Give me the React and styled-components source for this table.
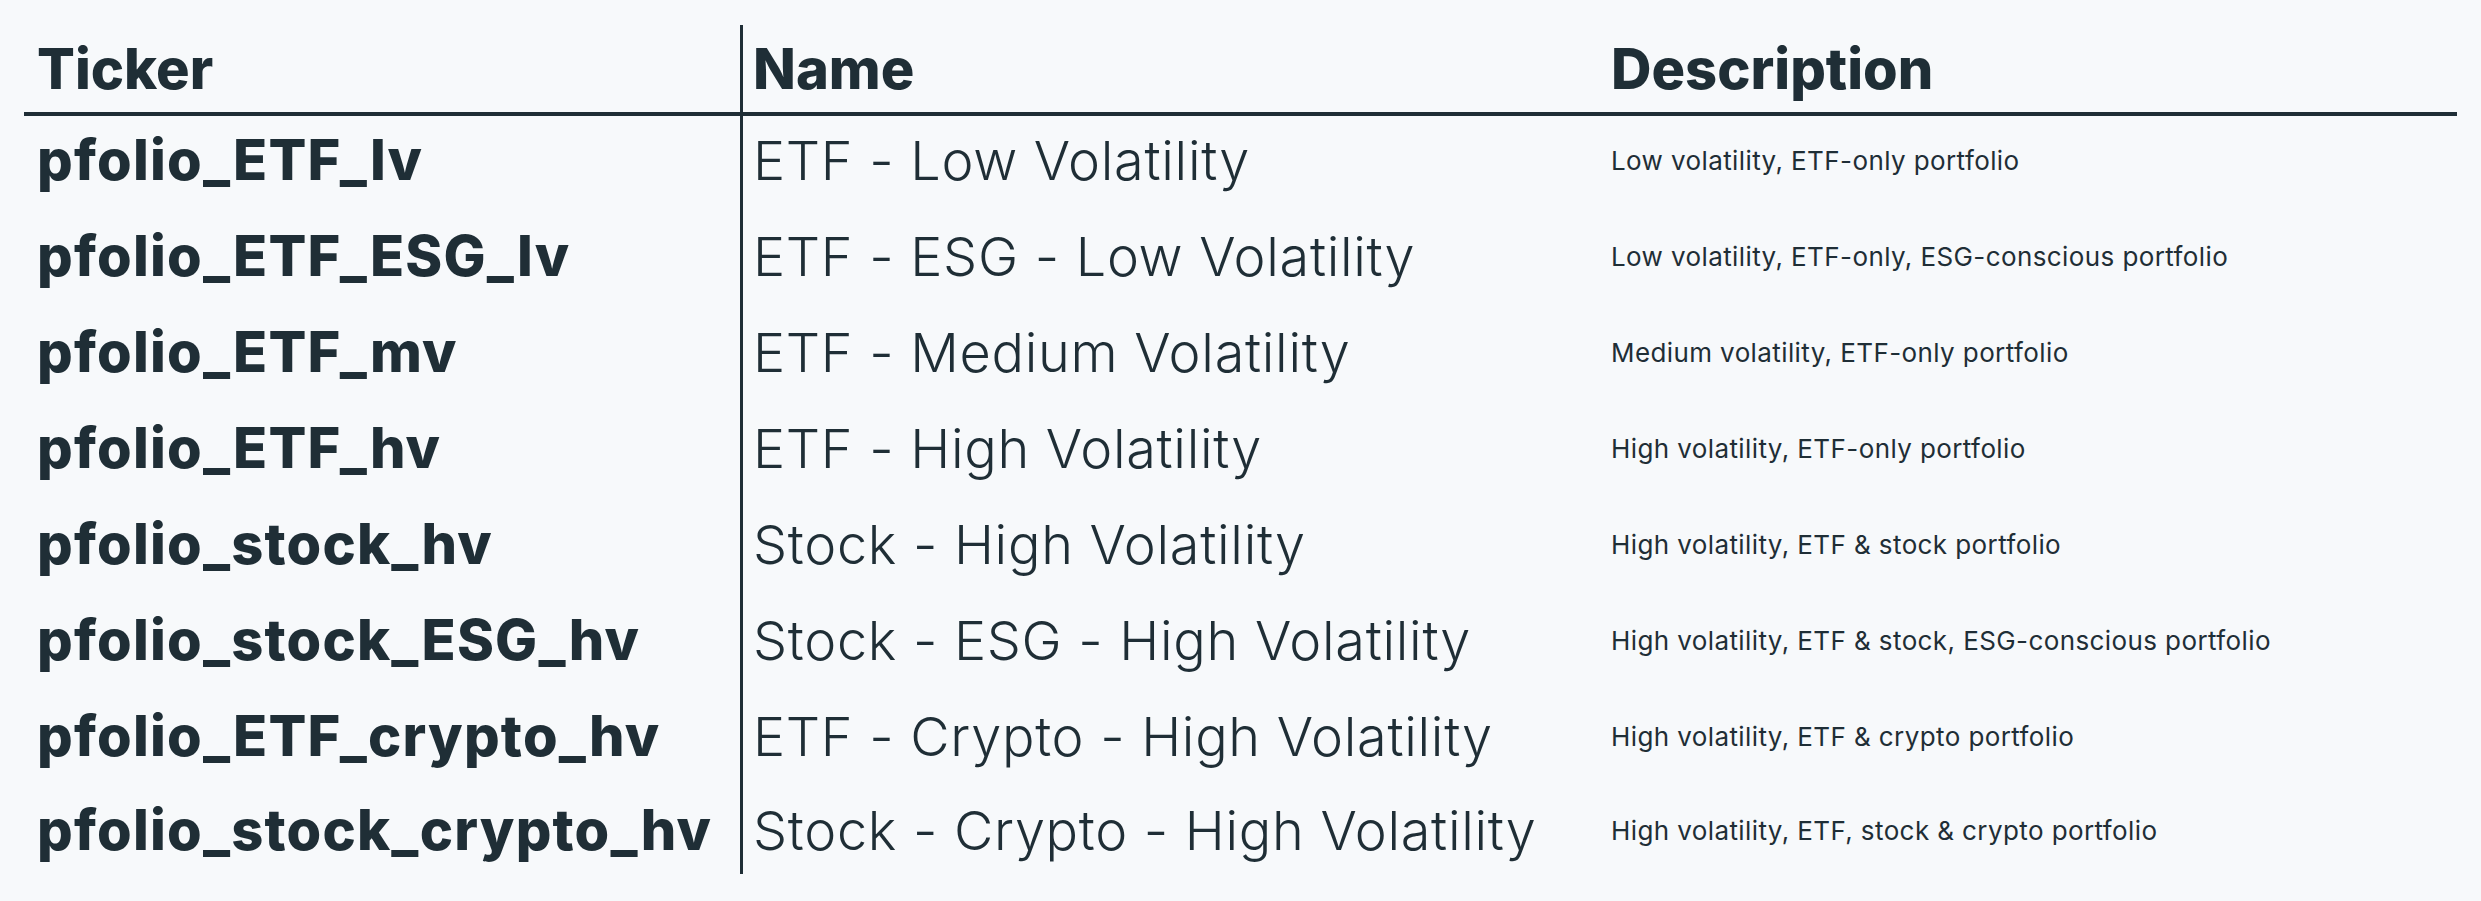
import React from "react";
import styled, { createGlobalStyle } from "styled-components";

const GlobalStyle = createGlobalStyle`
  html, body {
    margin: 0;
    background: #f7f9fb;
  }
  body {
    font-family: "Inter", "Noto Sans", sans-serif;
    color: #1f2e36;
  }
`;

const Page = styled.div`
  padding: 25px 24px 0 24px;
`;

const Table = styled.div`
  display: flex;
  flex-direction: column;
`;

const Row = styled.div`
  display: grid;
  grid-template-columns: 716px 860px 1fr;
  box-sizing: border-box;
  height: 96px;

  &:last-child {
    height: 86px;
  }
`;

const HeadRow = styled(Row)`
  height: 91px;
  border-bottom: 4px solid #1f2e36;
`;

const Cell = styled.div`
  display: flex;
  align-items: center;
  box-sizing: border-box;
  padding-left: ${(p) => (p.divider ? "10px" : p.desc ? "11px" : "13px")};
  padding-bottom: ${(p) => (p.head ? "0" : "8px")};
  border-left: ${(p) => (p.divider ? "3px solid #1f2e36" : "none")};
  white-space: nowrap;

  ${Row}:last-child > & {
    padding-bottom: 2px;
  }
`;

const HeadText = styled.span`
  font-size: 56px;
  font-weight: 800;
`;

const Ticker = styled.span`
  font-size: 56px;
  font-weight: 800;
  letter-spacing: 1.2px;
`;

const Name = styled.span`
  font-size: 54px;
  font-weight: 300;
  letter-spacing: 0.7px;
`;

const Desc = styled.span`
  font-size: 26px;
  font-weight: 400;
  letter-spacing: 0.4px;
`;

const portfolios = [
  ["pfolio_ETF_lv", "ETF - Low Volatility", "Low volatility, ETF-only portfolio"],
  ["pfolio_ETF_ESG_lv", "ETF - ESG - Low Volatility", "Low volatility, ETF-only, ESG-conscious portfolio"],
  ["pfolio_ETF_mv", "ETF - Medium Volatility", "Medium volatility, ETF-only portfolio"],
  ["pfolio_ETF_hv", "ETF - High Volatility", "High volatility, ETF-only portfolio"],
  ["pfolio_stock_hv", "Stock - High Volatility", "High volatility, ETF & stock portfolio"],
  ["pfolio_stock_ESG_hv", "Stock - ESG - High Volatility", "High volatility, ETF & stock, ESG-conscious portfolio"],
  ["pfolio_ETF_crypto_hv", "ETF - Crypto - High Volatility", "High volatility, ETF & crypto portfolio"],
  ["pfolio_stock_crypto_hv", "Stock - Crypto - High Volatility", "High volatility, ETF, stock & crypto portfolio"],
];

export default function App() {
  return (
    <>
      <GlobalStyle />
      <Page>
        <Table>
          <HeadRow>
            <Cell head>
              <HeadText>Ticker</HeadText>
            </Cell>
            <Cell head divider>
              <HeadText>Name</HeadText>
            </Cell>
            <Cell head desc>
              <HeadText>Description</HeadText>
            </Cell>
          </HeadRow>
          {portfolios.map(([ticker, name, desc]) => (
            <Row key={ticker}>
              <Cell>
                <Ticker>{ticker}</Ticker>
              </Cell>
              <Cell divider>
                <Name>{name}</Name>
              </Cell>
              <Cell desc>
                <Desc>{desc}</Desc>
              </Cell>
            </Row>
          ))}
        </Table>
      </Page>
    </>
  );
}
